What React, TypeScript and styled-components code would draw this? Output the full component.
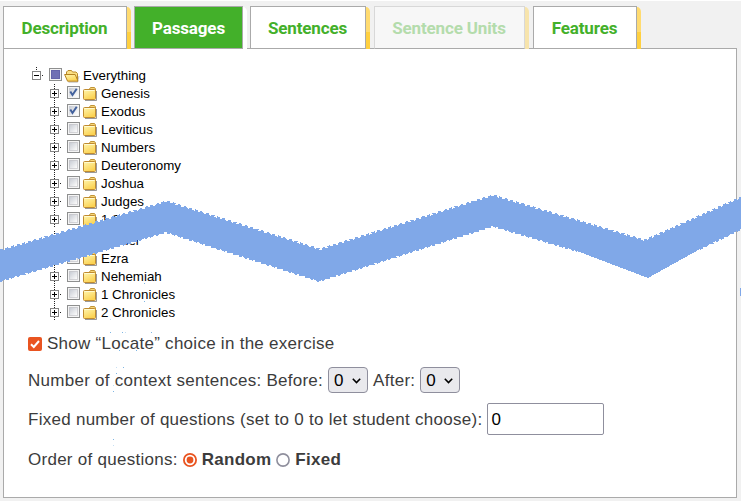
import React from "react";
import styled, { createGlobalStyle, css } from "styled-components";

const GlobalStyle = createGlobalStyle`
  * { box-sizing: border-box; }
  body {
    margin: 0;
    background: #f1f1f1;
    font-family: "Liberation Sans", Arial, sans-serif;
  }
`;

const Page = styled.main`
  position: relative;
  width: 741px;
  height: 501px;
  padding: 5px 4px 3px 3px;
  border-top: 1px solid #fff;
  display: flex;
  flex-direction: column;
  overflow: hidden;
`;

const TabBar = styled.nav`
  display: flex;
  height: 43px;
  flex: none;
  position: relative;
  z-index: 1;
`;

type TabState = "normal" | "active" | "disabled";

const Tab = styled.button<{ $state: TabState; $width: number; $gap: number }>`
  position: relative;
  width: ${(p) => p.$width}px;
  height: 43px;
  margin: 0 ${(p) => p.$gap}px 0 0;
  padding: 1px 1px 0 0;
  border: 1px solid #aaa;
  background: #fff;
  color: #43b02a;
  font: bold 17px/40px Roboto, sans-serif;
  letter-spacing: -0.15px;
  white-space: nowrap;
  text-align: center;

  &::after {
    content: "";
    position: absolute;
    top: 0;
    right: -5px;
    bottom: -1px;
    width: 4px;
    border-top-right-radius: 4px 5px;
    background: linear-gradient(#ffdb70 0 60%, #ffd040 60%);
  }

  ${(p) =>
    p.$state === "active" &&
    css`
      background: #43b02a;
      color: #fff;
      padding-right: 0;
      &::after { background: #fff; }
    `}

  ${(p) =>
    p.$state === "disabled" &&
    css`
      background: #f7f7f7;
      color: #b4dcac;
      border-color: #d8d8d8 #d8d8d8 #aaa;
      &::after { background: #f7e4ac; }
    `}
`;

const Panel = styled.section`
  flex: 1;
  margin-top: -1px;
  border: 1px solid #aaa;
  background: #fff;
  padding: 17px 24px 0;
`;

const Tree = styled.ul`
  list-style: none;
  margin: 0;
  padding: 0 0 0 4px;
  height: 255px;
  color: #000;
  font-size: 13.33px;
`;

const TreeRow = styled.li<{ $level: number; $cut?: boolean }>`
  display: flex;
  align-items: flex-start;
  height: 18px;
  padding-left: ${(p) => p.$level * 18}px;
  margin-top: ${(p) => (p.$cut ? 3 : 0)}px;
`;

const Branch = styled.svg`
  width: 18px;
  height: 18px;
  flex: none;
  display: block;
`;

const BoxIcon = styled.svg`
  width: 13px;
  height: 13px;
  margin: 2px 2px 0 -1px;
  flex: none;
`;

const FolderIcon = styled.svg<{ $open?: boolean }>`
  width: 17px;
  height: 16px;
  margin: 2px ${(p) => (p.$open ? 2 : 1)}px 0 ${(p) => (p.$open ? 0 : 1)}px;
  flex: none;
`;

const TreeLabel = styled.span`
  line-height: 19px;
  white-space: nowrap;
`;

const Line = styled.div<{ $height: number }>`
  display: flex;
  align-items: center;
  height: ${(p) => p.$height}px;
  color: #3c3c3c;
  font-size: 17px;
  letter-spacing: 0.27px;
  white-space: pre;
`;

const FieldLabel = styled.span`
  padding-top: 2px;
`;

const CheckMark = styled.svg`
  width: 14px;
  height: 14px;
  margin-right: 5px;
`;

const Select = styled.div`
  width: 40px;
  height: 26px;
  border: 1px solid #8f8f9d;
  border-radius: 4px;
  background: #e9e9ed;
  color: #000;
  display: flex;
  align-items: center;
  justify-content: space-between;
  padding: 1px 6px 0 5px;
  margin: 0 5px;
`;

const Chevron = styled.svg`
  width: 9px;
  height: 6px;
`;

const NumberInput = styled.input`
  width: 117px;
  height: 32px;
  margin-left: 5px;
  padding: 2px 3px 0;
  border: 1px solid #8f8f9d;
  border-radius: 2px;
  background: #fff;
  color: #000;
  font: 17px "Liberation Sans", Arial, sans-serif;
`;

const RadioDot = styled.svg`
  width: 14px;
  height: 14px;
  margin: 0 5px;
`;

const Strong = styled.b`
  font-weight: 700;
`;

const TearOverlay = styled.svg`
  position: absolute;
  left: 0;
  top: -1px;
  width: 741px;
  height: 501px;
  z-index: 2;
  pointer-events: none;
`;

function Toggle({ open, level }: { open?: boolean; level: number }) {
  return (
    <Branch viewBox="0 0 18 18" shapeRendering="crispEdges">
      <path d={open ? "M4.5 1V5" : "M4.5 0V18"} stroke="#222" strokeDasharray="1 1" />
      <path d="M10 9.5H11" stroke="#222" />
      <rect x="0.5" y="5.5" width="8" height="8" fill="#fff" stroke="#848484" />
      <path d={level ? "M2 9.5H7M4.5 7V12" : "M2 9.5H7"} stroke="#000" />
    </Branch>
  );
}

type Check = "partial" | "on" | "off";

function TreeBox({ state }: { state: Check }) {
  return (
    <BoxIcon viewBox="0 0 13 13">
      <defs>
        <linearGradient id="boxShade" x1="0" y1="0" x2="1" y2="1">
          <stop offset="0.1" stopColor="#c9cdd5" />
          <stop offset="0.85" stopColor="#fafafa" />
        </linearGradient>
      </defs>
      <rect x="0.5" y="0.5" width="12" height="12" fill="#f4f4f4" stroke="#8e8f8f" />
      <rect x="2" y="2" width="9" height="9" fill={state === "partial" ? "#7070b4" : "url(#boxShade)"} />
      {state === "off" && <rect x="2.5" y="2.5" width="8" height="8" fill="none" stroke="#c4c5c9" strokeOpacity="0.7" />}
      {state === "partial" && <rect x="2.5" y="2.5" width="8" height="8" fill="none" stroke="#6464aa" />}
      {state === "on" && <path d="M3.3 5.5L5.5 9L9.7 2.8" fill="none" stroke="#42619d" strokeWidth="2" />}
    </BoxIcon>
  );
}

function Folder({ open }: { open?: boolean }) {
  return (
    <FolderIcon $open={open} viewBox="0 0 17 16">
      <defs>
        <linearGradient id="folderFill" x1="0" y1="0" x2="0.5" y2="1">
          <stop offset="0" stopColor="#fff6b0" />
          <stop offset="1" stopColor="#fbd252" />
        </linearGradient>
      </defs>
      {open ? (
        <>
          <path d="M4.5 14.2H13.5L15 8" fill="none" stroke="#999" strokeOpacity="0.6" />
          <path d="M2.5 9V4L4 2.5H7.5L8.5 4H12L13.5 5.5V12" fill="#fbdf83" stroke="#b98a2b" />
          <path d="M0.6 6.5H11.2L14 13.2H3.6Z" fill="url(#folderFill)" stroke="#b58221" strokeLinejoin="round" />
        </>
      ) : (
        <>
          <path d="M2 14.5H13.5V5" fill="none" stroke="#777" strokeOpacity="0.75" />
          <path d="M6.5 5V3L7.5 1.5H11.5L12.5 3V5" fill="#f8d778" stroke="#c09438" />
          <rect x="0.5" y="3.5" width="12" height="10" rx="1" fill="url(#folderFill)" stroke="#c08b30" />
          <path d="M1.5 4.5H11.5" stroke="#fffbd0" />
        </>
      )}
    </FolderIcon>
  );
}

const tabs: { label: string; state: TabState; width: number; gap: number }[] = [
  { label: "Description", state: "normal", width: 124, gap: 7 },
  { label: "Passages", state: "active", width: 109, gap: 7 },
  { label: "Sentences", state: "normal", width: 116, gap: 8 },
  { label: "Sentence Units", state: "disabled", width: 151, gap: 8 },
  { label: "Features", state: "normal", width: 104, gap: 0 },
];

const books: { name: string; check: Check; cut?: boolean }[] = [
  { name: "Genesis", check: "on" },
  { name: "Exodus", check: "on" },
  { name: "Leviticus", check: "off" },
  { name: "Numbers", check: "off" },
  { name: "Deuteronomy", check: "off" },
  { name: "Joshua", check: "off" },
  { name: "Judges", check: "off" },
  { name: "1 Samuel", check: "off" },
  { name: "Daniel", check: "off", cut: true },
  { name: "Ezra", check: "off" },
  { name: "Nehemiah", check: "off" },
  { name: "1 Chronicles", check: "off" },
  { name: "2 Chronicles", check: "off" },
];

function NumberSelect() {
  return (
    <Select>
      0
      <Chevron viewBox="0 0 9 6">
        <path d="M0.8 0.8L4.5 4.5L8.2 0.8" fill="none" stroke="#000" strokeWidth="1.6" />
      </Chevron>
    </Select>
  );
}

function Radio({ on }: { on?: boolean }) {
  return (
    <RadioDot viewBox="0 0 14 14">
      <circle cx="7" cy="7" r="6.1" fill="#fff" stroke={on ? "#e95420" : "#8f8f9d"} strokeWidth={on ? 1.8 : 1.6} />
      {on && <circle cx="7" cy="7" r="3.4" fill="#e95420" />}
    </RadioDot>
  );
}

const specks: [number, number][] = [
  [110, 332], [122, 332], [125, 332], [119, 350], [136, 350], [116, 367],
  [123, 367], [116, 373], [113, 385], [113, 391], [113, 439], [113, 445],
  [144, 283], [144, 301], [110, 319], [151, 332],
];

function Tear() {
  return (
    <TearOverlay viewBox="0 0 741 501" shapeRendering="crispEdges">
      <path
        d="M0 251L167 202L320 250L493 196L645 241L741 198V229L700 249L648 278L577 251L493 226L319 281L166 232L0 281Z"
        fill="#80a8e8"
      />
      <path
        d="M0 250.5L167 201.5L320 249.5L493 195.5L645 240.5L741 197.5M0 281L166 232L319 281L493 226L577 251M700 249L741 229"
        fill="none"
        stroke="#80a8e8"
        strokeWidth="2"
        strokeDasharray="3.2 2.6"
      />
      <rect x="740" y="288" width="1" height="8" fill="#80a8e8" />
      {specks.map(([x, y], i) => (
        <rect key={i} x={x} y={y} width="1" height="1" fill="#71aee0" fillOpacity={i % 3 === 2 ? 0.4 : 0.9} />
      ))}
    </TearOverlay>
  );
}

export default function App() {
  return (
    <>
      <GlobalStyle />
      <Page>
        <TabBar>
          {tabs.map((t) => (
            <Tab key={t.label} $state={t.state} $width={t.width} $gap={t.gap}>
              {t.label}
            </Tab>
          ))}
        </TabBar>
        <Panel>
          <Tree>
            <TreeRow $level={0}>
              <Toggle open level={0} />
              <TreeBox state="partial" />
              <Folder open />
              <TreeLabel>Everything</TreeLabel>
            </TreeRow>
            {books.map((b) => (
              <TreeRow key={b.name} $level={1} $cut={b.cut}>
                <Toggle level={1} />
                <TreeBox state={b.check} />
                <Folder />
                <TreeLabel>{b.name}</TreeLabel>
              </TreeRow>
            ))}
          </Tree>
          <Line $height={46}>
            <CheckMark viewBox="0 0 14 14">
              <rect width="14" height="14" rx="2" fill="#e95420" />
              <path d="M3 7.2L5.8 10L11 4" fill="none" stroke="#fff" strokeWidth="2" />
            </CheckMark>
            Show “Locate” choice in the exercise
          </Line>
          <Line $height={26}>
            <FieldLabel>Number of context sentences: Before:</FieldLabel>
            <NumberSelect />
            <FieldLabel>After:</FieldLabel>
            <NumberSelect />
          </Line>
          <Line $height={52}>
            <FieldLabel>Fixed number of questions (set to 0 to let student choose):</FieldLabel>
            <NumberInput defaultValue="0" />
          </Line>
          <Line $height={29}>
            Order of questions:
            <Radio on />
            <Strong>Random</Strong>
            <Radio />
            <Strong>Fixed</Strong>
          </Line>
        </Panel>
        <Tear />
      </Page>
    </>
  );
}
